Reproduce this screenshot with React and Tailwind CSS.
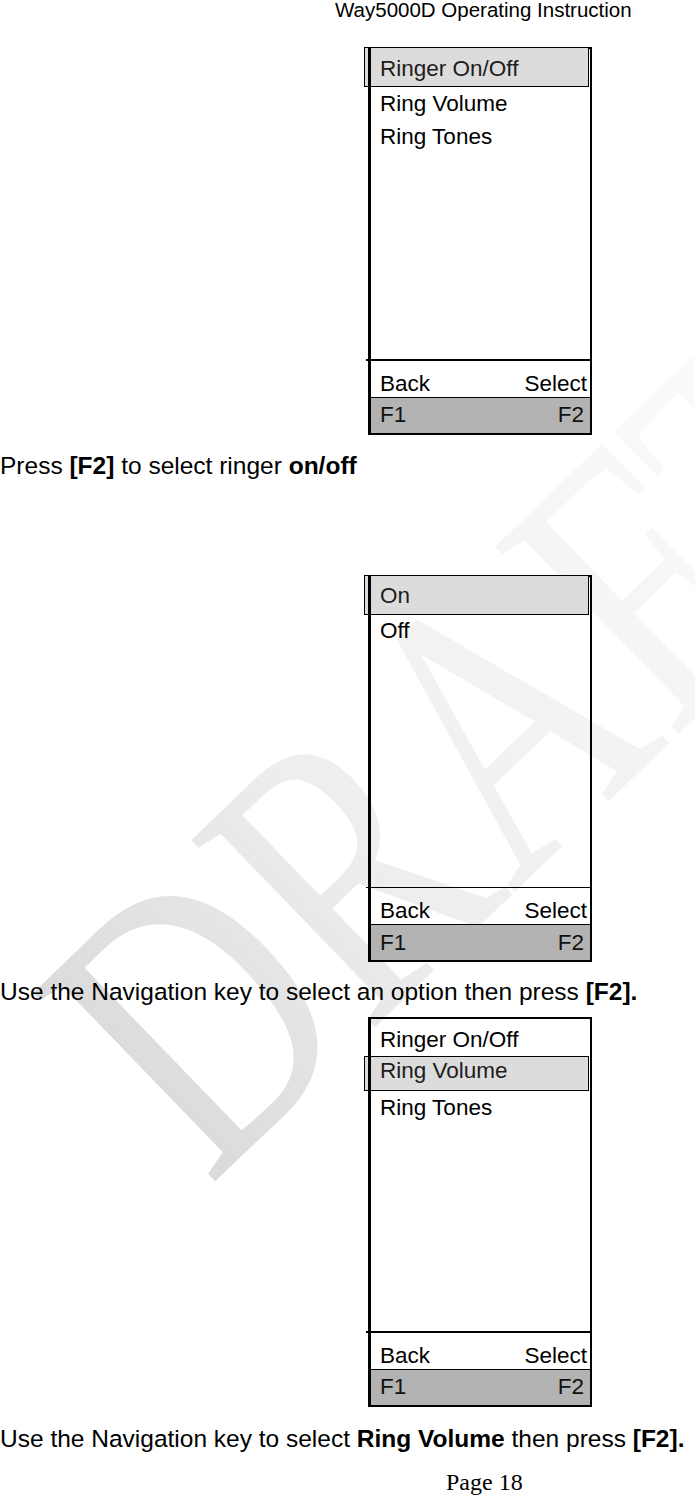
import React from "react";

const SANS = "font-['Liberation_Sans',Arial,sans-serif]";

function Menu({ items, sel }) {
  return (
    <div className="ml-[366px] w-[226px]">
      <div className="relative ml-[2px] w-[224px] border-t-2 border-r-2 border-black before:absolute before:left-0 before:-top-[2px] before:bottom-0 before:z-10 before:w-[2.5px] before:bg-black before:content-['']">
        <div className="h-[312px] text-[22.5px]">
          {items.map((it, i) => {
            if (i === sel) {
              if (i === 0) {
                return (
                  <div
                    key={it}
                    className="-ml-[4px] -mt-[2px] box-border flex h-[40px] w-[225px] items-center border border-black bg-[#dcdcdc] pl-[15px] pt-[3px] text-[#1c1c1c]"
                  >
                    {it}
                  </div>
                );
              }
              return (
                <div
                  key={it}
                  className="-ml-[4px] box-border flex h-[35px] w-[225px] items-center border border-black bg-[#dcdcdc] pl-[15px] pb-[5px] text-[#1c1c1c]"
                >
                  {it}
                </div>
              );
            }
            if (i === 0) {
              return (
                <div key={it} className="flex h-[37px] items-center pl-[12px] pt-[4px] text-black">
                  {it}
                </div>
              );
            }
            return (
              <div key={it} className="flex h-[33px] items-center pl-[12px] text-black">
                {it}
              </div>
            );
          })}
        </div>
        <div className="-ml-[2px] h-[1.5px] bg-black" />
        <div className="flex h-[36px] justify-between pl-[12px] pr-[3px] pt-[12px] text-[22.5px] leading-[22px] text-black">
          <span>Back</span>
          <span>Select</span>
        </div>
        <div className="box-border flex h-[38px] items-center justify-between border-t border-b-2 border-black bg-[#b3b3b3] pl-[12px] pr-[6px] text-[22.5px] text-[#111]">
          <span>F1</span>
          <span>F2</span>
        </div>
      </div>
    </div>
  );
}

export default function App() {
  return (
    <div className={`relative h-[1496px] w-[695px] overflow-hidden bg-white ${SANS}`}>
      <div className="pointer-events-none absolute left-[-23px] top-[947px] origin-top-left -rotate-[44deg] scale-x-[0.76] whitespace-nowrap bg-linear-to-r from-[#dadada] via-[#eeeeee] via-35% to-[#fcfcfc] bg-clip-text font-['Liberation_Serif','Times_New_Roman',serif] text-[400px] leading-none text-transparent select-none">
        DRAFT
      </div>

      <div className="relative z-10">
        <div className="-mt-[1px] h-[22px] whitespace-nowrap pl-[335px] text-[20.5px] leading-[22px] text-black">
          Way5000D Operating Instruction
        </div>

        <div className="mt-[26px]">
          <Menu items={["Ringer On/Off", "Ring Volume", "Ring Tones"]} sel={0} />
        </div>

        <p className="mt-[16px] h-[30px] text-[24.5px] leading-[30px] text-black">
          Press <b>[F2]</b> to select ringer <b>on/off</b>
        </p>

        <div className="mt-[94px]">
          <Menu items={["On", "Off"]} sel={0} />
        </div>

        <p className="mt-[15px] h-[30px] text-[24.5px] leading-[30px] text-black">
          Use the Navigation key to select an option then press <b>[F2].</b>
        </p>

        <div className="mt-[10px]">
          <Menu items={["Ringer On/Off", "Ring Volume", "Ring Tones"]} sel={1} />
        </div>

        <p className="mt-[17px] h-[30px] whitespace-nowrap text-[24.5px] leading-[30px] text-black">
          Use the Navigation key to select <b>Ring Volume</b> then press <b>[F2].</b>
        </p>

        <p className="mt-[16px] h-[24px] pl-[446px] font-['Liberation_Serif','Times_New_Roman',serif] text-[24px] leading-[24px] text-black">
          Page 18
        </p>
      </div>
    </div>
  );
}
